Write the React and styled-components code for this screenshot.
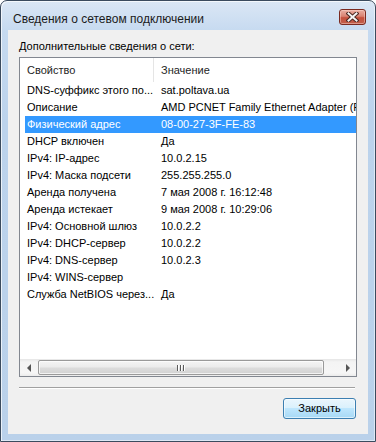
import React from 'react';
import styled, { createGlobalStyle, css } from 'styled-components';

const GlobalStyle = createGlobalStyle`
    html, body {
        margin: 0;
        padding: 0;
    }
    body {
        width: 376px;
        height: 442px;
        overflow: hidden;
        background: #ffffff;
        font-family: "Liberation Sans", Arial, sans-serif;
    }
`;

const Window = styled.div`
    box-sizing: border-box;
    width: 376px;
    height: 442px;
    display: flex;
    flex-direction: column;
    border: 1px solid #3b4b5e;
    border-radius: 7px 7px 0 0;
    background: linear-gradient(to bottom, #dbe7f5 0px, #c6daf0 30px, #bcd3ec 120px, #bad1ea 100%);
    box-shadow: inset 1px 1px 0 rgba(255, 255, 255, 0.7), inset -1px -1px 0 rgba(255, 255, 255, 0.5);
`;

const TitleBar = styled.div`
    height: 29px;
    display: flex;
    align-items: flex-start;
    flex-shrink: 0;
`;

const Title = styled.div`
    padding: 10px 0 0 12px;
    font-size: 12px;
    line-height: 16px;
    color: #1b1b1b;
    white-space: nowrap;
`;

const CloseButton = styled.div`
    box-sizing: border-box;
    width: 27px;
    height: 16px;
    margin: 8px 9px 0 auto;
    border: 1px solid #7a2a20;
    border-radius: 3px;
    background: linear-gradient(to bottom, #eab0a4 0%, #d98272 45%, #c5503d 55%, #c0604c 100%);
    box-shadow: inset 0 0 0 1px rgba(255, 220, 210, 0.45);
    display: flex;
    align-items: center;
    justify-content: center;
`;

const Client = styled.div`
    flex: 1;
    margin: 0 7px 7px;
    background: #f0f0f0;
    padding: 9px 11px 15px;
    display: flex;
    flex-direction: column;
    box-sizing: border-box;
`;

const Label = styled.div`
    font-size: 11px;
    line-height: 14px;
    color: #000;
`;

const ListBox = styled.div`
    margin-top: 4px;
    box-sizing: border-box;
    width: 338px;
    height: 320px;
    border: 1px solid #828790;
    background: #ffffff;
    display: flex;
    flex-direction: column;
`;

const Viewport = styled.div`
    flex: 1;
    overflow: hidden;
`;

const Content = styled.div`
    width: 560px;
`;

const Header = styled.div`
    display: flex;
    height: 24px;
    background: #ffffff;
`;

const HeaderCell = styled.div`
    box-sizing: border-box;
    width: ${p => p.$width}px;
    padding-left: 7px;
    font-size: 11px;
    line-height: 24px;
    color: #1e1e1e;
    border-right: 1px solid #e5e5e5;
    white-space: nowrap;
`;

const Row = styled.div`
    display: flex;
    height: 17px;
    margin-left: 5px;
    font-size: 11px;
    line-height: 17px;
    color: #000;
    ${p => p.$selected && css`
        background: #3399ff;
        color: #ffffff;
    `}
`;

const Cell = styled.div`
    box-sizing: border-box;
    width: ${p => p.$width}px;
    padding-left: ${p => p.$pad}px;
    white-space: nowrap;
    overflow: hidden;
`;

const ScrollBar = styled.div`
    height: 17px;
    display: flex;
    flex-shrink: 0;
    background: linear-gradient(to bottom, #e6e6e6 0px, #f4f4f4 3px, #f6f6f6 14px, #ebebeb 100%);
`;

const ArrowButton = styled.div`
    width: 17px;
    height: 17px;
    display: flex;
    align-items: center;
    justify-content: center;
    &::before {
        content: '';
        width: 0;
        height: 0;
        border-top: 4px solid transparent;
        border-bottom: 4px solid transparent;
        ${p => p.$dir === 'left'
            ? css`border-right: 4px solid #555;`
            : css`border-left: 4px solid #555;`}
    }
`;

const Track = styled.div`
    flex: 1;
    display: flex;
    align-items: center;
`;

const Thumb = styled.div`
    box-sizing: border-box;
    width: 286px;
    height: 15px;
    margin-left: 1px;
    border: 1px solid #9a9a9a;
    border-radius: 2px;
    background: linear-gradient(to bottom, #f5f5f5 0%, #ececec 45%, #dcdcdc 55%, #d2d2d2 100%);
    box-shadow: inset 0 0 0 1px rgba(255, 255, 255, 0.7);
    display: flex;
    align-items: center;
    justify-content: center;
    gap: 1px;
`;

const Grip = styled.span`
    width: 1px;
    height: 6px;
    background: #5a5a5a;
    box-shadow: 1px 0 0 #ffffff;
    margin-right: 1px;
`;

const Separator = styled.div`
    margin-top: 10px;
    width: 336px;
    height: 1px;
    background: #a0a0a0;
    border-bottom: 1px solid #ffffff;
`;

const Footer = styled.div`
    display: flex;
    justify-content: flex-end;
    margin-top: 9px;
    padding-right: 1px;
`;

const Button = styled.div`
    box-sizing: border-box;
    width: 73px;
    height: 21px;
    border: 1px solid #3c7fb1;
    border-radius: 3px;
    background: linear-gradient(to bottom, #eaf6fd 0%, #d9f0fc 50%, #bee6fd 50%, #a7d9f5 100%);
    box-shadow: inset 0 0 0 1px rgba(255, 255, 255, 0.6);
    font-size: 11px;
    line-height: 19px;
    text-align: center;
    color: #000;
`;

const rows = [
    ['DNS-суффикс этого по...', 'sat.poltava.ua'],
    ['Описание', 'AMD PCNET Family Ethernet Adapter (PCNET-FAST III)'],
    ['Физический адрес', '08-00-27-3F-FE-83', true],
    ['DHCP включен', 'Да'],
    ['IPv4: IP-адрес', '10.0.2.15'],
    ['IPv4: Маска подсети', '255.255.255.0'],
    ['Аренда получена', '7 мая 2008 г. 16:12:48'],
    ['Аренда истекает', '9 мая 2008 г. 10:29:06'],
    ['IPv4: Основной шлюз', '10.0.2.2'],
    ['IPv4: DHCP-сервер', '10.0.2.2'],
    ['IPv4: DNS-сервер', '10.0.2.3'],
    ['IPv4: WINS-сервер', ''],
    ['Служба NetBIOS через...', 'Да'],
];

const CloseIcon = () => (
    <svg width="13" height="10" viewBox="0 0 13 10">
        <path d="M2.5 1.5 L10.5 8.5 M10.5 1.5 L2.5 8.5" stroke="#4a2620" strokeWidth="4" strokeLinecap="square" />
        <path d="M2.5 1.5 L10.5 8.5 M10.5 1.5 L2.5 8.5" stroke="#f4f4f4" strokeWidth="2" strokeLinecap="square" />
    </svg>
);

const App = () => {
    return (
        <>
            <GlobalStyle />
            <Window>
                <TitleBar>
                    <Title>Сведения о сетевом подключении</Title>
                    <CloseButton><CloseIcon /></CloseButton>
                </TitleBar>
                <Client>
                    <Label>Дополнительные сведения о сети:</Label>
                    <ListBox>
                        <Viewport>
                            <Content>
                                <Header>
                                    <HeaderCell $width={134}>Свойство</HeaderCell>
                                    <HeaderCell $width={300}>Значение</HeaderCell>
                                </Header>
                                {rows.map(([name, value, selected]) => (
                                    <Row key={name} $selected={selected}>
                                        <Cell $width={129} $pad={2}>{name}</Cell>
                                        <Cell $width={300} $pad={7}>{value}</Cell>
                                    </Row>
                                ))}
                            </Content>
                        </Viewport>
                        <ScrollBar>
                            <ArrowButton $dir="left" />
                            <Track>
                                <Thumb><Grip /><Grip /><Grip /></Thumb>
                            </Track>
                            <ArrowButton $dir="right" />
                        </ScrollBar>
                    </ListBox>
                    <Separator />
                    <Footer>
                        <Button>Закрыть</Button>
                    </Footer>
                </Client>
            </Window>
        </>
    );
};

export default App;
